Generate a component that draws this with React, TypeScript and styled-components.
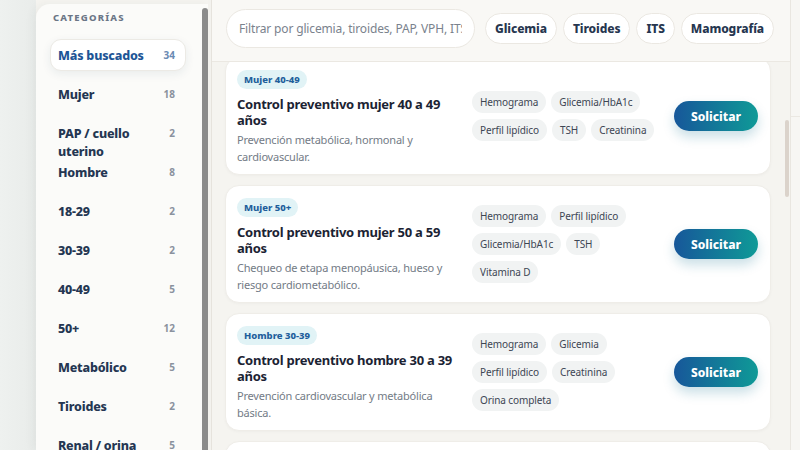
import styled, { createGlobalStyle } from 'styled-components'

type Category = { label: string; count: number; active?: boolean }

type Plan = {
    badge: string
    title: string
    description: string
    tests: string[]
}

const categories: Category[] = [
    { label: 'Más buscados', count: 34, active: true },
    { label: 'Mujer', count: 18 },
    { label: 'PAP / cuello uterino', count: 2 },
    { label: 'Hombre', count: 8 },
    { label: '18-29', count: 2 },
    { label: '30-39', count: 2 },
    { label: '40-49', count: 5 },
    { label: '50+', count: 12 },
    { label: 'Metabólico', count: 5 },
    { label: 'Tiroides', count: 2 },
    { label: 'Renal / orina', count: 5 },
]

const quickFilters = ['Glicemia', 'Tiroides', 'ITS', 'Mamografía']

const plans: Plan[] = [
    {
        badge: 'Mujer 40-49',
        title: 'Control preventivo mujer 40 a 49 años',
        description: 'Prevención metabólica, hormonal y cardiovascular.',
        tests: ['Hemograma', 'Glicemia/HbA1c', 'Perfil lipídico', 'TSH', 'Creatinina'],
    },
    {
        badge: 'Mujer 50+',
        title: 'Control preventivo mujer 50 a 59 años',
        description: 'Chequeo de etapa menopáusica, hueso y riesgo cardiometabólico.',
        tests: ['Hemograma', 'Perfil lipídico', 'Glicemia/HbA1c', 'TSH', 'Vitamina D'],
    },
    {
        badge: 'Hombre 30-39',
        title: 'Control preventivo hombre 30 a 39 años',
        description: 'Prevención cardiovascular y metabólica básica.',
        tests: ['Hemograma', 'Glicemia', 'Perfil lipídico', 'Creatinina', 'Orina completa'],
    },
    {
        badge: 'Hombre 40-49',
        title: 'Control preventivo hombre 40 a 49 años',
        description: 'Chequeo metabólico, prostático y cardiovascular.',
        tests: ['Hemograma', 'Glicemia/HbA1c', 'Perfil lipídico', 'PSA'],
    },
]

export default function App() {
    return (
        <>
            <GlobalStyle />
            <Shell>
                <Gutter />
                <Sidebar>
                    <SideList>
                        <SideTitle>Categorías</SideTitle>
                        {categories.map((c) => (
                            <SideItem key={c.label} active={c.active}>
                                <SideLabel active={c.active}>{c.label}</SideLabel>
                                <SideCount active={c.active}>{c.count}</SideCount>
                            </SideItem>
                        ))}
                    </SideList>
                    <SideScroll />
                </Sidebar>
                <Seam />
                <Main>
                    <TopBar>
                        <Search placeholder="Filtrar por glicemia, tiroides, PAP, VPH, ITS..." />
                        <Chips>
                            {quickFilters.map((f) => (
                                <Chip key={f}>{f}</Chip>
                            ))}
                        </Chips>
                    </TopBar>
                    <Feed>
                        <FeedList>
                            {plans.map((p) => (
                                <Card key={p.title}>
                                    <Info>
                                        <Badge>{p.badge}</Badge>
                                        <Title>{p.title}</Title>
                                        <Description>{p.description}</Description>
                                    </Info>
                                    <Tags>
                                        {p.tests.map((t) => (
                                            <Tag key={t}>{t}</Tag>
                                        ))}
                                    </Tags>
                                    <RequestButton>Solicitar</RequestButton>
                                </Card>
                            ))}
                        </FeedList>
                        <FeedThumb />
                    </Feed>
                </Main>
                <RightPane>
                    <RightHead />
                </RightPane>
            </Shell>
        </>
    )
}

const GlobalStyle = createGlobalStyle`
    * { box-sizing: border-box; }
    html, body { margin: 0; padding: 0; }
    body {
        font-family: 'Noto Sans', 'Liberation Sans', sans-serif;
        background: #f5f4f0;
        color: #1b2333;
    }
`

const Shell = styled.div`
    display: flex;
    width: 800px;
    height: 450px;
    overflow: hidden;
    background: #f5f4f0;
`

const Gutter = styled.div`
    width: 36px;
    flex: none;
    background: linear-gradient(90deg, #eef1ef 0%, #e9ecea 100%);
`

const Sidebar = styled.aside`
    width: 172px;
    flex: none;
    display: flex;
    margin-top: 4px;
    background: #fbfbf9;
    border-radius: 14px 0 0 0;
    box-shadow: -3px 0 10px rgba(40, 50, 60, 0.05);
`

const SideList = styled.nav`
    flex: 1;
    display: flex;
    flex-direction: column;
    gap: 7px;
    padding: 9px 16px 0 14px;
    min-width: 0;
`

const SideTitle = styled.div`
    font-size: 9.5px;
    font-weight: 800;
    letter-spacing: 1.2px;
    text-transform: uppercase;
    color: #6b7686;
    line-height: 10px;
    padding-left: 3px;
    margin-bottom: 9px;
`

const SideItem = styled.div<{ active?: boolean }>`
    height: 32px;
    flex: none;
    display: flex;
    justify-content: space-between;
    align-items: flex-start;
    padding: 7px 10px 0 7px;
    border-radius: 11px;
    background: ${({ active }) => (active ? '#ffffff' : 'transparent')};
    border: 1px solid ${({ active }) => (active ? '#eceae5' : 'transparent')};
    box-shadow: ${({ active }) => (active ? '0 3px 10px rgba(30, 60, 90, 0.08)' : 'none')};
`

const SideLabel = styled.span<{ active?: boolean }>`
    font-size: 12.5px;
    font-weight: 800;
    line-height: 18px;
    letter-spacing: -0.2px;
    color: ${({ active }) => (active ? '#1d5596' : '#243652')};
    max-width: 90px;
`

const SideCount = styled.span<{ active?: boolean }>`
    font-size: 10px;
    font-weight: 700;
    line-height: 16px;
    color: ${({ active }) => (active ? '#6a8ab3' : '#8a929e')};
`

const SideScroll = styled.div`
    width: 6px;
    flex: none;
    margin-top: 4px;
    background: #8b8b8b;
    border-radius: 3px 3px 0 0;
`

const Seam = styled.div`
    width: 4px;
    flex: none;
    background: #f3f2ee;
    border-right: 1px solid #e6e3dd;
`

const Main = styled.main`
    width: 578px;
    flex: none;
    display: flex;
    flex-direction: column;
`

const TopBar = styled.header`
    height: 62px;
    flex: none;
    display: flex;
    align-items: center;
    gap: 10px;
    padding: 0 14px 5px;
    background: #f9f8f5;
    border-bottom: 1px solid #ebe8e2;
    position: relative;
    z-index: 1;
`

const Search = styled.input`
    width: 249px;
    height: 39px;
    flex: none;
    border-radius: 20px;
    border: 1px solid #ebe8e2;
    background: #ffffff;
    padding: 0 12px;
    font-family: inherit;
    font-size: 12px;
    letter-spacing: -0.15px;
    color: #1b2333;
    outline: none;
    &::placeholder {
        color: #7a828d;
    }
`

const Chips = styled.div`
    display: flex;
    gap: 6px;
`

const Chip = styled.button`
    height: 31px;
    padding: 0 9px;
    border-radius: 16px;
    border: 1px solid #ebe8e2;
    background: #ffffff;
    font-family: inherit;
    font-size: 12px;
    font-weight: 800;
    letter-spacing: -0.1px;
    color: #26364f;
`

const Feed = styled.section`
    flex: 1;
    position: relative;
    overflow: hidden;
`

const FeedList = styled.div`
    display: flex;
    flex-direction: column;
    gap: 10px;
    margin-top: -5px;
    padding: 0 19px 0 13px;
`

const FeedThumb = styled.div`
    position: absolute;
    right: 1px;
    top: 58px;
    width: 4px;
    height: 77px;
    border-radius: 2px;
    background: #dbd3cb;
`

const Card = styled.article`
    height: 118px;
    flex: none;
    display: grid;
    grid-template-columns: 223px 1fr 84px;
    column-gap: 12px;
    align-items: center;
    padding: 0 12px 0 11px;
    background: #ffffff;
    border: 1px solid #efede8;
    border-radius: 14px;
    box-shadow: 0 1px 3px rgba(40, 40, 30, 0.03);
`

const Info = styled.div`
    display: flex;
    flex-direction: column;
    align-items: flex-start;
    padding-top: 3px;
`

const Badge = styled.span`
    height: 19px;
    line-height: 19px;
    padding: 0 7px;
    border-radius: 10px;
    background: #e1f3f6;
    color: #1f5f9c;
    font-size: 9.5px;
    font-weight: 800;
`

const Title = styled.h3`
    margin: 7px 0 0;
    font-size: 13px;
    font-weight: 700;
    line-height: 16px;
    letter-spacing: -0.25px;
    color: #1b2333;
`

const Description = styled.p`
    margin: 3px 0 0;
    font-size: 11px;
    line-height: 17px;
    letter-spacing: -0.2px;
    color: #737b86;
`

const Tags = styled.div`
    display: flex;
    flex-wrap: wrap;
    gap: 6px 5px;
`

const Tag = styled.span`
    height: 22px;
    line-height: 22px;
    padding: 0 8px;
    border-radius: 11px;
    background: #f1f3f3;
    color: #3d4654;
    font-size: 10px;
    letter-spacing: -0.1px;
`

const RequestButton = styled.button`
    width: 84px;
    height: 30px;
    border: none;
    border-radius: 15px;
    background: linear-gradient(90deg, #17579a 0%, #0f9a97 100%);
    color: #ffffff;
    font-family: inherit;
    font-size: 12px;
    font-weight: 800;
    box-shadow: 0 6px 12px rgba(15, 110, 140, 0.22);
`

const RightPane = styled.aside`
    flex: 1;
    background: #f7f6f3;
    border-left: 1px solid #e9e6e0;
`

const RightHead = styled.div`
    height: 117px;
    border-bottom: 1px solid #ebe8e2;
`
